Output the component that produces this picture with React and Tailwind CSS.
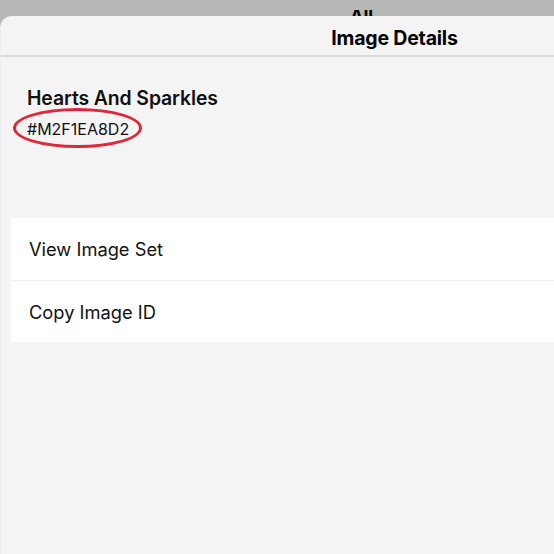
import React from 'react'

const rows = ['View Image Set', 'Copy Image ID']

const App = () => {
  return (
    <div
      className="w-[554px] h-[554px] overflow-hidden bg-[#b7b8b5] flex flex-col"
      style={{ fontFamily: 'Inter, "Noto Sans", sans-serif' }}
    >
      {/* page behind the sheet, only the top edge of its title shows */}
      <div className="h-[16px] shrink-0 relative">
        <div className="absolute left-[350px] top-[10px] h-[6px] overflow-hidden">
          <span className="block text-[18px] font-bold text-black leading-[12px]">All</span>
        </div>
      </div>

      <div className="flex-1 bg-[#f4f4f4] rounded-tl-[12px] border-l border-[#ececec] flex flex-col">
        <div className="h-[41px] shrink-0 flex items-center justify-center pl-[234px] pt-[4px] border-b-2 border-[#dadada]">
          <h1 className="text-[19.5px] font-bold text-black tracking-[-0.2px] leading-[22px]">Image Details</h1>
        </div>

        <div className="pl-[26px] pt-[29px]">
          <p className="text-[19.4px] font-semibold text-[#111] leading-[24px] tracking-[-0.1px]">Hearts And Sparkles</p>
          <div className="relative inline-block mt-[7px]">
            <span className="text-[16px] text-[#111] leading-[20px]">#M2F1EA8D2</span>
            <span className="absolute left-[-14px] right-[-13px] top-[-9px] bottom-[-7px] rounded-[50%] border-[3px] border-[#e2263a]" />
          </div>
        </div>

        <div className="mt-[77px] ml-[10px] bg-white flex flex-col">
          {rows.map((label, i) => (
            <div
              key={label}
              className={`h-[62px] flex items-center pl-[18px] pt-[2px] ${i > 0 ? 'border-t border-[#f0f0f0]' : ''}`}
            >
              <span className="text-[18.3px] text-[#111]">{label}</span>
            </div>
          ))}
        </div>
      </div>
    </div>
  )
}

export default App
